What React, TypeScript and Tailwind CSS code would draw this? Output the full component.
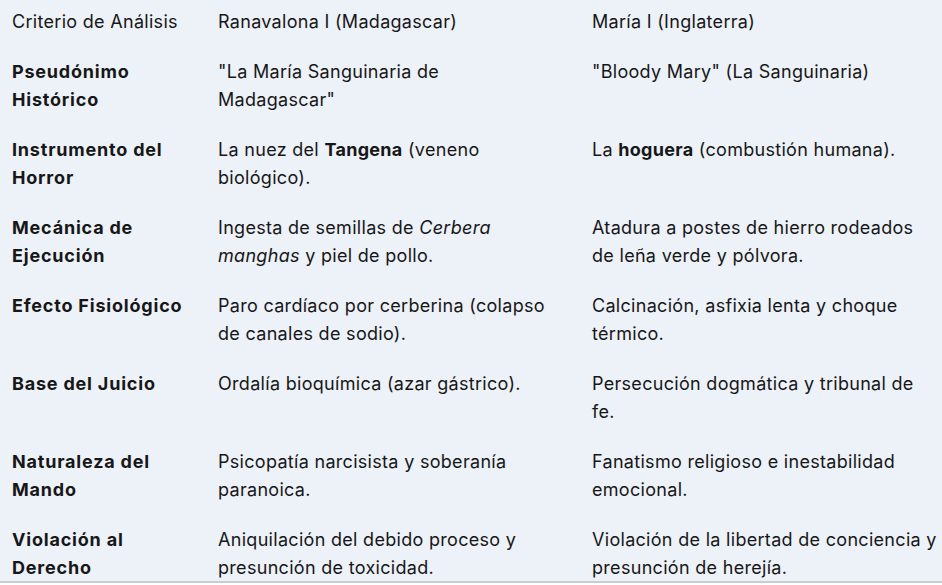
import React from 'react';

type Row = {
  label: string;
  a: React.ReactNode;
  b: React.ReactNode;
};

// filas de la tabla comparativa
const rows: Row[] = [
  {
    label: 'Pseudónimo Histórico',
    a: (
      <>
        "La María Sanguinaria de
        <br />
        Madagascar"
      </>
    ),
    b: '"Bloody Mary" (La Sanguinaria)',
  },
  {
    label: 'Instrumento del Horror',
    a: (
      <>
        La nuez del <strong className="font-bold">Tangena</strong> (veneno biológico).
      </>
    ),
    b: (
      <>
        La <strong className="font-bold">hoguera</strong> (combustión humana).
      </>
    ),
  },
  {
    label: 'Mecánica de Ejecución',
    a: (
      <>
        Ingesta de semillas de <em>Cerbera manghas</em> y piel de pollo.
      </>
    ),
    b: (
      <>
        Atadura a postes de hierro rodeados
        <br />
        de leña verde y pólvora.
      </>
    ),
  },
  {
    label: 'Efecto Fisiológico',
    a: 'Paro cardíaco por cerberina (colapso de canales de sodio).',
    b: 'Calcinación, asfixia lenta y choque térmico.',
  },
  {
    label: 'Base del Juicio',
    a: 'Ordalía bioquímica (azar gástrico).',
    b: (
      <>
        Persecución dogmática y tribunal de
        <br />
        fe.
      </>
    ),
  },
  {
    label: 'Naturaleza del Mando',
    a: 'Psicopatía narcisista y soberanía paranoica.',
    b: 'Fanatismo religioso e inestabilidad emocional.',
  },
  {
    label: 'Violación al Derecho',
    a: 'Aniquilación del debido proceso y presunción de toxicidad.',
    b: 'Violación de la libertad de conciencia y presunción de herejía.',
  },
];

export default function App() {
  return (
    <div className="h-[585px] w-[942px] overflow-hidden bg-white font-['Inter','Noto_Sans',sans-serif] text-[18px] leading-[28px] tracking-[0.3px] text-[#171717]">
      <div className="h-[583px] overflow-hidden border-b-2 border-[#c9ccd1] bg-[#edf1f8]">
        <table className="w-[954px] table-fixed border-collapse text-left">
          <colgroup>
            <col className="w-[206px]" />
            <col className="w-[374px]" />
            <col className="w-[374px]" />
          </colgroup>
          <thead>
            <tr>
              <th className="px-3 pt-2 pb-[11px] align-top font-normal">Criterio de Análisis</th>
              <th className="px-3 pt-2 pb-[11px] align-top font-normal">Ranavalona I (Madagascar)</th>
              <th className="px-3 pt-2 pb-[11px] align-top font-normal">María I (Inglaterra)</th>
            </tr>
          </thead>
          <tbody>
            {rows.map((r) => (
              <tr key={r.label}>
                <td className="px-3 py-[11px] align-top font-bold tracking-[0.8px]">{r.label}</td>
                <td className="px-3 py-[11px] align-top">{r.a}</td>
                <td className="px-3 py-[11px] align-top">{r.b}</td>
              </tr>
            ))}
          </tbody>
        </table>
      </div>
    </div>
  );
}
